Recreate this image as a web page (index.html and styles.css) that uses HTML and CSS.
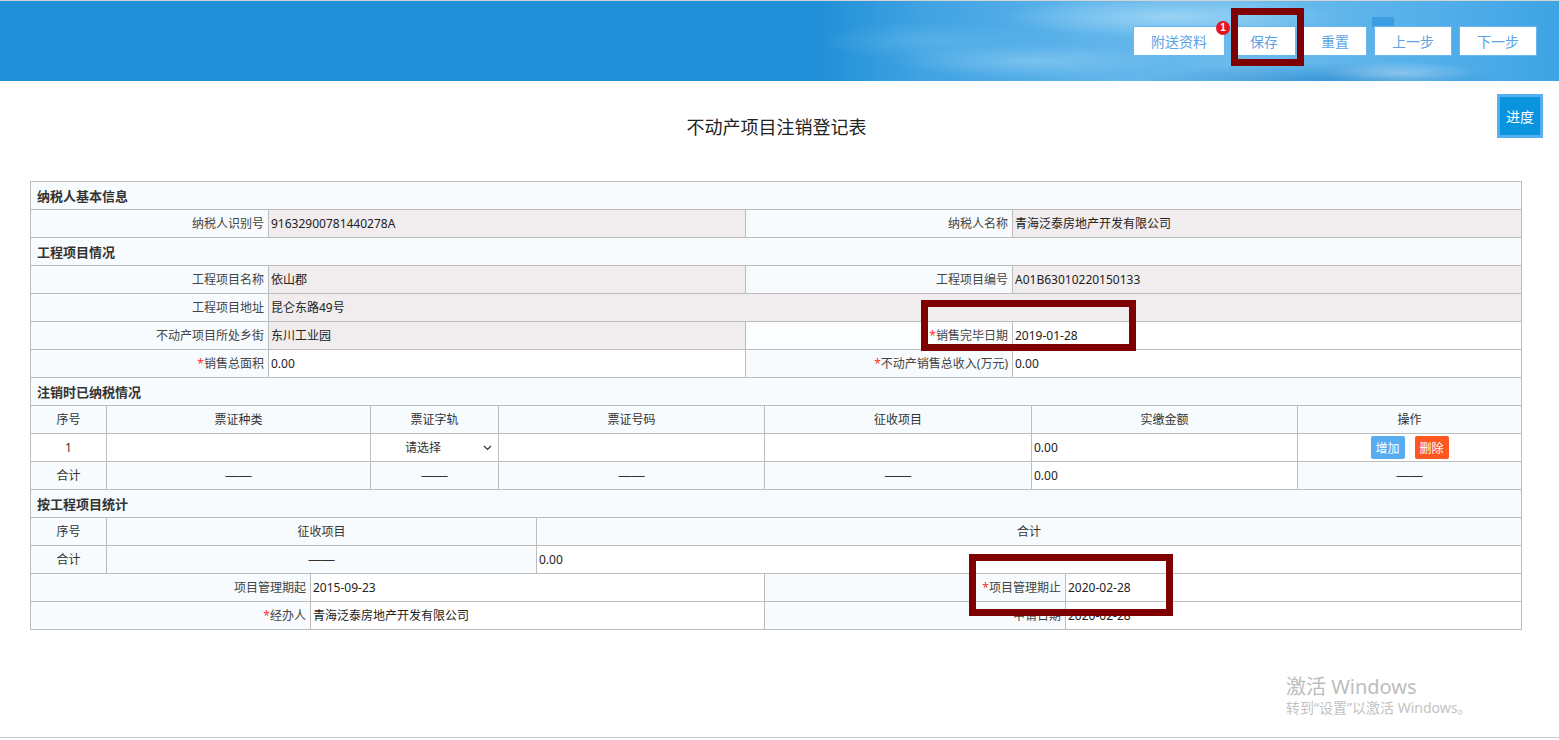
FILE: index.html
```html
<!DOCTYPE html>
<html lang="zh-CN">
<head>
<meta charset="utf-8">
<title>不动产项目注销登记表</title>
<link rel="stylesheet" href="styles.css">
</head>
<body>
<div class="page">
  <header class="topbar">
    <div class="tower"></div>
    <nav class="actions">
      <button class="act">附送资料<span class="badge">1</span></button>
      <button class="act">保存</button>
      <button class="act">重置</button>
      <button class="act">上一步</button>
      <button class="act">下一步</button>
    </nav>
  </header>

  <button class="progress">进度</button>

  <main class="content">
    <h1 class="title">不动产项目注销登记表</h1>

    <div class="form">
      <div class="row sec">纳税人基本信息</div>
      <div class="row g4">
        <div class="c lbl">纳税人识别号</div>
        <div class="c val ro">91632900781440278A</div>
        <div class="c lbl">纳税人名称</div>
        <div class="c val ro">青海泛泰房地产开发有限公司</div>
      </div>

      <div class="row sec">工程项目情况</div>
      <div class="row g4">
        <div class="c lbl">工程项目名称</div>
        <div class="c val ro">依山郡</div>
        <div class="c lbl">工程项目编号</div>
        <div class="c val ro">A01B63010220150133</div>
      </div>
      <div class="row g2">
        <div class="c lbl">工程项目地址</div>
        <div class="c val ro">昆仑东路49号</div>
      </div>
      <div class="row g4">
        <div class="c lbl">不动产项目所处乡街</div>
        <div class="c val ro">东川工业园</div>
        <div class="c lbl white"><span class="req">*</span>销售完毕日期</div>
        <div class="c val">2019-01-28</div>
      </div>
      <div class="row g4">
        <div class="c lbl"><span class="req">*</span>销售总面积</div>
        <div class="c val">0.00</div>
        <div class="c lbl"><span class="req">*</span>不动产销售总收入(万元)</div>
        <div class="c val">0.00</div>
      </div>

      <div class="row sec">注销时已纳税情况</div>
      <div class="row g7">
        <div class="c ctr lt">序号</div>
        <div class="c ctr lt">票证种类</div>
        <div class="c ctr lt">票证字轨</div>
        <div class="c ctr lt">票证号码</div>
        <div class="c ctr lt">征收项目</div>
        <div class="c ctr lt">实缴金额</div>
        <div class="c ctr lt">操作</div>
      </div>
      <div class="row g7">
        <div class="c ctr">1</div>
        <div class="c"></div>
        <div class="c sel"><span>请选择</span><svg class="chev" width="9" height="6" viewBox="0 0 9 6"><path d="M1 1l3.5 3.5L8 1" fill="none" stroke="#333" stroke-width="1.2"/></svg></div>
        <div class="c"></div>
        <div class="c"></div>
        <div class="c val">0.00</div>
        <div class="c ops"><button class="op add">增加</button><button class="op del">删除</button></div>
      </div>
      <div class="row g7">
        <div class="c ctr lt">合计</div>
        <div class="c ctr lt dash">——</div>
        <div class="c ctr lt dash">——</div>
        <div class="c ctr lt dash">——</div>
        <div class="c ctr lt dash">——</div>
        <div class="c val">0.00</div>
        <div class="c ctr lt dash">——</div>
      </div>

      <div class="row sec">按工程项目统计</div>
      <div class="row g3">
        <div class="c ctr lt">序号</div>
        <div class="c ctr lt">征收项目</div>
        <div class="c ctr lt">合计</div>
      </div>
      <div class="row g3">
        <div class="c ctr lt">合计</div>
        <div class="c ctr lt dash">——</div>
        <div class="c val">0.00</div>
      </div>
      <div class="row gb">
        <div class="c lbl">项目管理期起</div>
        <div class="c val">2015-09-23</div>
        <div class="c lbl"><span class="req">*</span>项目管理期止</div>
        <div class="c val">2020-02-28</div>
      </div>
      <div class="row gb">
        <div class="c lbl"><span class="req">*</span>经办人</div>
        <div class="c val">青海泛泰房地产开发有限公司</div>
        <div class="c lbl">申请日期</div>
        <div class="c val">2020-02-28</div>
      </div>
    </div>
  </main>

  <div class="mark m1"></div>
  <div class="mark m2"></div>
  <div class="mark m3"></div>

  <div class="watermark">
    <div class="wm1">激活 Windows</div>
    <div class="wm2">转到“设置”以激活 Windows。</div>
  </div>
</div>
</body>
</html>
```

FILE: styles.css
```css
* { box-sizing: border-box; margin: 0; padding: 0; }
html, body { width: 100%; height: 100%; background: #fff; }
body {
  font-family: "Noto Sans", "Noto Sans CJK SC", "Microsoft YaHei", sans-serif;
  font-size: 12px;
  color: #333;
  overflow: hidden;
}
.page {
  position: relative;
  height: 738px;
  border-bottom: 1px solid #c9c9c9;
}

/* header */
.topbar {
  position: relative;
  height: 81px;
  border-top: 1px solid #d4d4d4;
  display: flex;
  justify-content: flex-end;
  align-items: flex-start;
  padding: 25px 22px 0 0;
  background:
    radial-gradient(110px 16px at 1400px 72px, rgba(255,255,255,.35), transparent 70%),
    radial-gradient(260px 26px at 1320px 80px, rgba(10,110,190,.45), transparent 70%),
    radial-gradient(240px 30px at 1170px 16px, rgba(170,220,248,.75), transparent 70%),
    radial-gradient(200px 24px at 1030px 60px, rgba(150,210,244,.55), transparent 70%),
    radial-gradient(160px 28px at 930px 40px, rgba(120,195,238,.4), transparent 70%),
    linear-gradient(90deg, #2190d8 0, #2190d8 820px, #3fa2e2 920px, #5db3ea 1080px, #6cbbec 1250px, #55b0ea 1420px, #3ea4e4 1559px);
}
.tower {
  position: absolute;
  left: 1372px;
  top: 16px;
  width: 22px;
  height: 10px;
  background: #3b9ee2;
  border-radius: 1px;
}
.actions { display: flex; position: relative; }
.act {
  position: relative;
  height: 30px;
  padding: 0 17px;
  margin-left: 7px;
  background: #fff;
  border: 1px solid #6ab6f0;
  color: #5ba3e6;
  font: 14px/28px "Noto Sans CJK SC", "Microsoft YaHei", sans-serif;
}
.badge {
  position: absolute;
  top: -6px;
  right: -6px;
  width: 14px;
  height: 14px;
  border-radius: 50%;
  background: #e8141c;
  color: #fff;
  font: bold 10px/14px "Liberation Sans", sans-serif;
  text-align: center;
}

.progress {
  position: absolute;
  left: 1497px;
  top: 94px;
  width: 46px;
  height: 44px;
  background: #0a94dd;
  border: 3px solid #55aef0;
  color: #fff;
  font: 14px/38px "Noto Sans CJK SC", "Microsoft YaHei", sans-serif;
  text-align: center;
}

/* content */
.title {
  margin-top: 33px;
  height: 24px;
  font-family: "Noto Sans CJK SC", "Microsoft YaHei", sans-serif;
  font-size: 18px;
  line-height: 24px;
  font-weight: normal;
  color: #222;
  text-align: center;
  padding-right: 6px;
}
.form {
  margin: 43px 0 0 30px;
  width: 1492px;
  border-left: 1px solid #bdbdbd;
  border-top: 1px solid #bdbdbd;
}
.row { display: grid; height: 28px; }
.sec {
  display: block;
  border-right: 1px solid #bdbdbd;
  border-bottom: 1px solid #bdbdbd;
  background: #f7fbfd;
  font-family: "Noto Sans CJK SC", "Microsoft YaHei", sans-serif;
  font-size: 13px;
  font-weight: bold;
  line-height: 27px;
  padding-left: 6px;
  color: #333;
}
.g4 { grid-template-columns: 238px 477px 267px 509px; }
.g2 { grid-template-columns: 238px 1253px; }
.g7 { grid-template-columns: 76px 264px 128px 266px 267px 266px 224px; }
.g3 { grid-template-columns: 76px 430px 985px; }
.gb { grid-template-columns: 280px 454px 301px 456px; }

.c {
  border-right: 1px solid #bdbdbd;
  border-bottom: 1px solid #bdbdbd;
  line-height: 27px;
  white-space: nowrap;
  overflow: hidden;
  background: #fff;
}
.lbl { text-align: right; padding-right: 4px; background: #f7fbfd; color: #444; }
.lbl.white { background: #fcfdfe; }
.val { padding-left: 2px; background: #fff; color: #222; }
.ro { background: #f1eced; }
.ctr { text-align: center; }
.lt { background: #f7fbfd; }
.dash { font-family: "Liberation Sans", sans-serif; font-size: 13px; color: #333; }
.req { color: #ff3030; }

.sel {
  display: flex;
  align-items: center;
  padding-left: 34px;
  padding-right: 6px;
}
.sel .chev { margin-left: auto; }

.ops {
  display: flex;
  justify-content: center;
  align-items: center;
  gap: 10px;
}
.op {
  width: 34px;
  height: 23px;
  border: none;
  border-radius: 2px;
  color: #fff;
  font: 12px/23px "Noto Sans CJK SC", "Microsoft YaHei", sans-serif;
}
.add { background: #58acf0; }
.del { background: #ff5722; }

/* annotation overlays */
.mark {
  position: absolute;
  border: 7px solid #7f0000;
  pointer-events: none;
}
.m1 { left: 1231px; top: 8px; width: 73px; height: 58px; }
.m2 { left: 921px; top: 300px; width: 215px; height: 51px; }
.m3 { left: 969px; top: 554px; width: 204px; height: 62px; }

.watermark {
  position: absolute;
  left: 1286px;
  top: 675px;
  pointer-events: none;
  font-family: "Noto Sans", "Noto Sans CJK SC", sans-serif;
}
.wm1 { font-size: 20px; line-height: 23px; color: #bdbdbd; }
.wm2 { font-size: 14px; line-height: 17px; color: #c3c3c3; margin-top: 1px; }
```
